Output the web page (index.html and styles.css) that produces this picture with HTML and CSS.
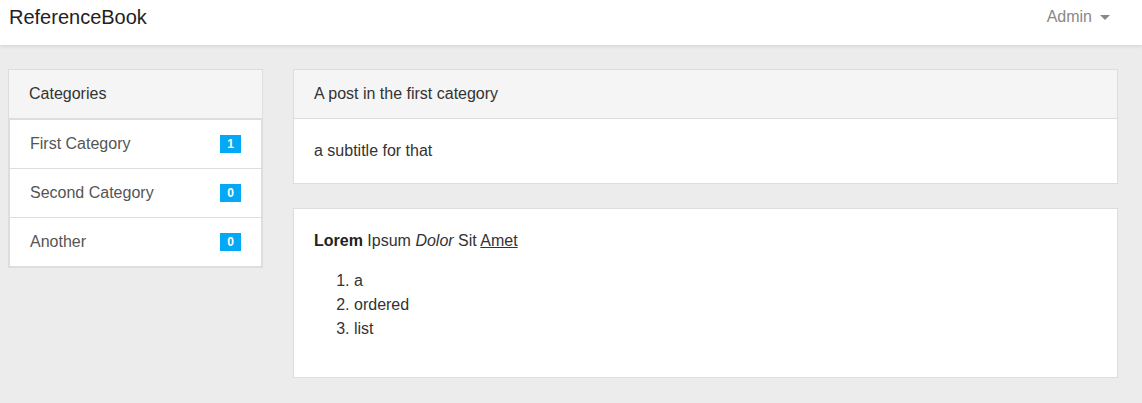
FILE: index.html
```html
<!DOCTYPE html>
<html>
<head>
<meta charset="utf-8">
<link rel="stylesheet" href="styles.css">
</head>
<body>
<nav class="navbar">
  <span class="brand">ReferenceBook</span>
  <span class="user">Admin <span class="caret"></span></span>
</nav>
<main class="layout">
  <aside class="panel side">
    <div class="panel-heading">Categories</div>
    <ul class="list-group">
      <li class="list-item"><span>First Category</span><span class="badge">1</span></li>
      <li class="list-item"><span>Second Category</span><span class="badge">0</span></li>
      <li class="list-item"><span>Another</span><span class="badge">0</span></li>
    </ul>
  </aside>
  <section class="content">
    <div class="panel">
      <div class="panel-heading">A post in the first category</div>
      <div class="panel-body">a subtitle for that</div>
    </div>
    <div class="panel">
      <div class="panel-body">
        <p class="lead"><strong>Lorem</strong> Ipsum <em>Dolor</em> Sit <u>Amet</u></p>
        <ol class="olist">
          <li>a</li>
          <li>ordered</li>
          <li>list</li>
        </ol>
      </div>
    </div>
  </section>
</main>
</body>
</html>
```
FILE: styles.css
```css
html, body {
  margin: 0;
  padding: 0;
}
body {
  background: #ececec;
  font-family: "Liberation Sans", Arial, sans-serif;
  font-size: 16px;
  line-height: 24px;
  color: #333;
  height: 403px;
  overflow: hidden;
}
.navbar {
  height: 45px;
  background: #fff;
  box-shadow: 0 1px 4px rgba(0, 0, 0, 0.12);
  display: flex;
  justify-content: space-between;
  align-items: flex-start;
  padding: 5px 32px 0 9px;
  box-sizing: border-box;
  position: relative;
}
.brand {
  font-size: 20px;
  line-height: 24px;
  color: #222;
}
.user {
  color: #888;
  line-height: 24px;
  display: flex;
  align-items: center;
}
.caret {
  display: inline-block;
  width: 0;
  height: 0;
  margin-left: 8px;
  border-left: 5px solid transparent;
  border-right: 5px solid transparent;
  border-top: 5px solid #888;
}
.layout {
  display: flex;
  align-items: flex-start;
  gap: 30px;
  padding: 24px 24px 0 8px;
}
.panel {
  background: #fff;
  border: 1px solid #ddd;
}
.side {
  width: 255px;
  box-sizing: border-box;
  flex: none;
}
.content {
  width: 825px;
  display: flex;
  flex-direction: column;
  gap: 24px;
}
.panel-heading {
  background: #f5f5f5;
  border-bottom: 1px solid #ddd;
  padding: 12px 20px;
  color: #333;
}
.panel-body {
  padding: 20px;
}
.list-group {
  list-style: none;
  margin: 0;
  padding: 0;
}
.list-item {
  display: flex;
  justify-content: space-between;
  align-items: center;
  padding: 12px 20px;
  border: 1px solid #ddd;
  margin-bottom: -1px;
  color: #555;
  background: #fff;
}
.list-item:last-child {
  margin-bottom: 0;
}
.badge {
  background: #03a9f4;
  color: #fff;
  font-weight: bold;
  font-size: 12px;
  line-height: 18px;
  width: 21px;
  text-align: center;
}
.lead {
  margin: 0 0 16px;
}
.lead strong {
  color: #222;
}
.olist {
  margin: 0 0 16px;
  padding-left: 40px;
}
```
